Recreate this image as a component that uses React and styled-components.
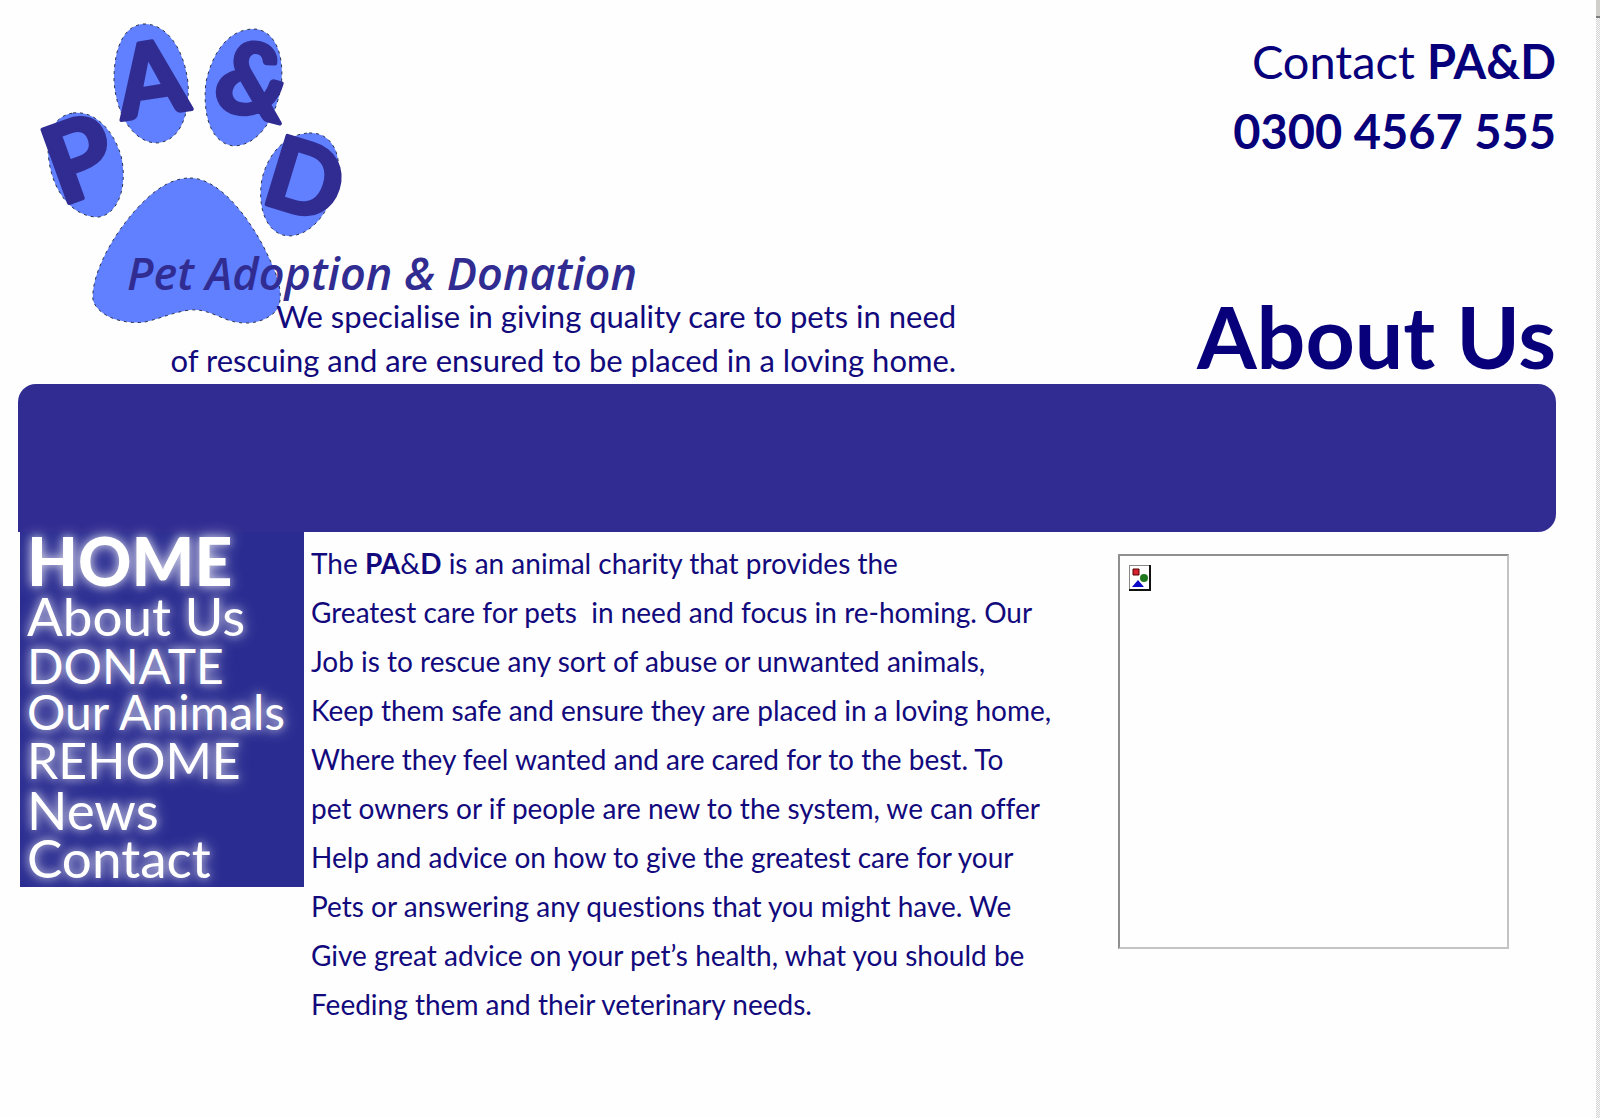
import React from 'react';
import styled, { createGlobalStyle } from 'styled-components';

const GlobalStyle = createGlobalStyle`
  body {
    margin: 0;
    background: #fefefe;
    color: #120a7c;
    font-family: Lato, 'Open Sans', sans-serif;
    font-variant-ligatures: none;
  }
`;

const Page = styled.div`
  display: flex;
  min-height: 100vh;
`;

const Main = styled.div`
  flex: 1;
  min-width: 0;
  padding: 0 40px 0 18px;
`;

const ScrollTrack = styled.div`
  width: 4px;
  background: repeating-conic-gradient(#d6d6d6 0 25%, #f6f6f6 0 50%) 0 0 / 2px 2px;
`;

const ScrollButton = styled.div`
  height: 16px;
  background: #d0cfca;
  border-bottom: 2px solid #7c7c7c;
`;

const Header = styled.header`
  display: flex;
  justify-content: space-between;
  height: 384px;
`;

const Brand = styled.div`
  display: grid;
  flex: 0 0 61%;
`;

const Logo = styled.svg`
  grid-area: 1 / 1;
  width: 660px;
  height: 340px;
  font-family: Lato, sans-serif;
  font-weight: 700;
`;

const Slogan = styled.p`
  grid-area: 1 / 1;
  align-self: end;
  margin: 0;
  padding-bottom: 2px;
  font-size: 31px;
  line-height: 44px;
  text-align: right;
`;

const HeaderSide = styled.div`
  display: flex;
  flex-direction: column;
  justify-content: space-between;
  text-align: right;
  color: #07007a;
`;

const Phone = styled.p`
  margin: 0;
  padding-top: 26px;
  font-size: 47px;
  line-height: 70px;
`;

const Title = styled.h1`
  margin: 0;
  font-size: 86px;
  line-height: 97px;
`;

const Banner = styled.div`
  height: 148px;
  background: #312c91;
  border-radius: 18px 18px 18px 0;
`;

const Columns = styled.div`
  display: flex;
  align-items: flex-start;
`;

const Nav = styled.nav`
  display: flex;
  flex-direction: column;
  flex: 0 0 270px;
  margin-left: 2px;
  padding: 0 7px 5px;
  background: #2a2c91;
`;

const NavLink = styled.a`
  font-size: ${({ $size }) => $size}px;
  font-weight: ${({ $heavy }) => ($heavy ? 900 : 400)};
  line-height: ${({ $row }) => $row}px;
  color: #fff;
  text-decoration: none;
  white-space: nowrap;
  text-shadow: 0 0 8px rgba(255, 255, 255, .6), 0 0 16px rgba(255, 255, 255, .6);
`;

const Text = styled.p`
  flex: 1;
  margin: 0;
  padding: 7px 0 0 7px;
  font-size: 28px;
  line-height: 49px;
`;

const Photo = styled.div`
  flex: 0 0 387px;
  height: 391px;
  margin: 22px 47px 0 0;
  border: 2px solid;
  border-color: #8f8f8f #c4c4c4 #c4c4c4 #8f8f8f;
`;

const BrokenIcon = styled.svg`
  display: block;
  margin: 9px;
`;

const links = [
  { name: 'HOME', size: 66, row: 58, heavy: true },
  { name: 'About Us', size: 53, row: 52 },
  { name: 'DONATE', size: 48, row: 48 },
  { name: 'Our Animals', size: 48, row: 44 },
  { name: 'REHOME', size: 50, row: 52 },
  { name: 'News', size: 53, row: 48 },
  { name: 'Contact', size: 53, row: 48 },
];

const PawLogo = () => (
  <Logo viewBox="18 0 660 340" role="img" aria-label="Pet Adoption and Donation">
    <g fill="#6080ff" stroke="#2c3450" strokeWidth="1" strokeDasharray="3 4">
      <path d="M73 113C96 110 116 133 122 160C127 190 117 214 99 217C76 218 54 196 49 161C45 134 54 116 73 113Z" />
      <path d="M143 24C166 23 184 48 188 83C190 117 179 142 156 143C134 142 116 116 114 80C114 47 124 26 143 24Z" />
      <path d="M254 29C275 30 285 55 281 87C275 120 258 145 234 146C212 144 202 117 206 82C213 50 230 29 254 29Z" />
      <path d="M309 133C332 132 343 155 337 182C330 211 312 236 288 236C266 234 257 207 262 179C268 153 286 134 309 133Z" />
      <path d="M190 178C220 178 252 220 270 260C281 283 284 302 275 312C263 323 246 326 228 320C210 313 203 309 190 310C174 312 162 318 145 322C121 325 97 315 93 300C91 278 108 244 128 219C149 193 169 178 190 178Z" />
    </g>
    <g fill="#312c91" stroke="#312c91" strokeWidth="4" strokeLinejoin="round">
      <text transform="translate(61 206) rotate(-20)" fontSize="108">P</text>
      <text transform="translate(122 120) rotate(-9)" fontSize="101">A</text>
      <text transform="translate(210 106) rotate(14)" fontSize="100">&amp;</text>
      <text transform="translate(259 202) rotate(17)" fontSize="99">D</text>
    </g>
    <text x="127" y="290" fill="#312c91" fontFamily="Open Sans, sans-serif" fontSize="45" fontWeight="600" fontStyle="italic">
      Pet Adoption &amp; Donation
    </text>
  </Logo>
);

const App = () => (
  <>
    <GlobalStyle />
    <Page>
      <Main>
        <Header>
          <Brand>
            <PawLogo />
            <Slogan>
              We specialise in giving quality care to pets in need
              <br />
              of rescuing and are ensured to be placed in a loving home.
            </Slogan>
          </Brand>
          <HeaderSide>
            <Phone>
              Contact <b>PA&amp;D</b>
              <br />
              <b>0300 4567 555</b>
            </Phone>
            <Title>About Us</Title>
          </HeaderSide>
        </Header>
        <Banner />
        <Columns>
          <Nav>
            {links.map(({ name, size, row, heavy }) => (
              <NavLink key={name} href="#" $size={size} $row={row} $heavy={heavy}>{name}</NavLink>
            ))}
          </Nav>
          <Text>
            The <b>PA</b>&amp;<b>D</b> is an animal charity that provides the<br />
            Greatest care for pets&nbsp; in need and focus in re-homing. Our<br />
            Job is to rescue any sort of abuse or unwanted animals,<br />
            Keep them safe and ensure they are placed in a loving home,<br />
            Where they feel wanted and are cared for to the best. To<br />
            pet owners or if people are new to the system, we can offer<br />
            Help and advice on how to give the greatest care for your<br />
            Pets or answering any questions that you might have. We<br />
            Give great advice on your pet’s health, what you should be<br />
            Feeding them and their veterinary needs.
          </Text>
          <Photo>
            <BrokenIcon width="22" height="26" viewBox="0 0 22 26">
              <path d="M0 0H22V26H0Z" fill="#111" />
              <path d="M0 0H20V24H0Z" fill="#888" />
              <path d="M1 1H20V24H1Z" fill="#fff" />
              <path d="M4 4H10V10H4Z" fill="#d8202e" stroke="#500" />
              <circle cx="15" cy="13" r="4" fill="#1f7a1f" />
              <path d="M3 22L9 15L15 22Z" fill="#0a0ac8" />
            </BrokenIcon>
          </Photo>
        </Columns>
      </Main>
      <ScrollTrack>
        <ScrollButton />
      </ScrollTrack>
    </Page>
  </>
);

export default App;
